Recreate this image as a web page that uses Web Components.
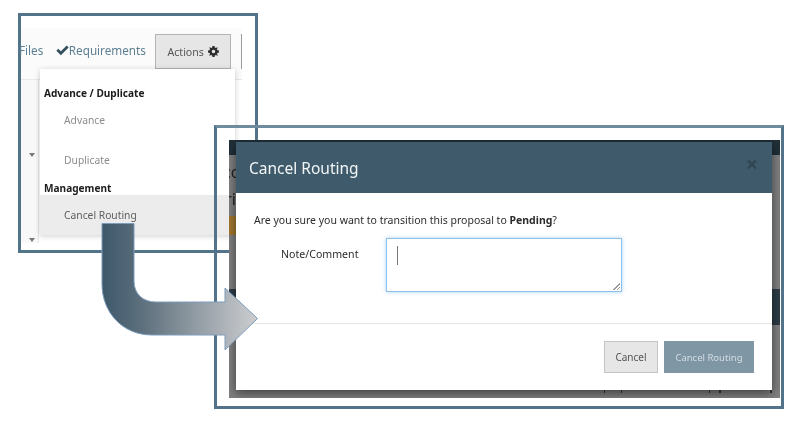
<!DOCTYPE html>
<html lang="en">
<head>
<meta charset="UTF-8">
<title>Cancel Routing</title>
<style>
  html, body { margin: 0; background: #fff; }
  body { width: 807px; height: 432px; overflow: hidden; font-family: "Noto Sans", "Open Sans", sans-serif; }
  #stage { position: relative; width: 807px; height: 432px; filter: blur(.4px); }
</style>
</head>
<body>
<div id="stage">
  <actions-callout></actions-callout>
  <modal-callout></modal-callout>
  <bent-arrow></bent-arrow>
</div>

<script>
  class MenuItem extends HTMLElement {
    constructor() {
      super();
      this.attachShadow({mode: 'open'}).innerHTML = `
        <style>
          :host { display: flex; align-items: center; height: var(--h, 40px); padding-left: 24px; font-size: 10.3px; color: #8c8c8c; }
          :host([active]) { background: #ececec; color: #5f5f5f; }
        </style>
        <slot></slot>`;
    }
  }
  customElements.define('menu-item', MenuItem);

  class MenuHeading extends HTMLElement {
    constructor() {
      super();
      this.attachShadow({mode: 'open'}).innerHTML = `
        <style>
          :host { display: flex; align-items: center; height: var(--h, 16px); padding-left: 4px; font-size: 10.1px; font-weight: 700; color: #1c1c1c; }
        </style>
        <slot></slot>`;
    }
  }
  customElements.define('menu-heading', MenuHeading);

  class ActionsCallout extends HTMLElement {
    constructor() {
      super();
      this.attachShadow({mode: 'open'}).innerHTML = `
        <style>
          :host { position: absolute; left: 18px; top: 13px; width: 240px; height: 240px; box-sizing: border-box; border: 3px solid #527389; padding-top: 12px; }
          .bar { display: flex; align-items: flex-start; width: 221px; height: 52px; box-sizing: border-box; background: #fbfbfb; border-bottom: 1px solid #e9e9e9; padding-top: 5px; }
          .tab { font-size: 11.7px; color: #5d7f93; line-height: 34px; }
          .files { width: 35px; text-indent: -2px; }
          .req { display: flex; align-items: center; gap: 0; width: 100px; }
          .req svg { width: 13px; height: 11px; flex: none; }
          .btn { display: flex; align-items: center; justify-content: center; gap: 4px; box-sizing: border-box; width: 76px; height: 35px; margin-top: 1px; background: #e6e6e6; border: 1px solid #b4b4b4; font-size: 10.6px; color: #555; }
          .btn svg { width: 11px; height: 11px; }
          .rule { width: 1px; height: 35px; margin: 1px 0 0 10px; background: #9a9a9a; }
          .side { display: flex; flex-direction: column; align-items: center; width: 18px; height: 163px; box-sizing: border-box; background: #f8f8f8; border-right: 1px solid #e6e6e6; padding: 73px 0 0 4px; gap: 81px; }
          .caret { width: 0; height: 0; border: 3px solid transparent; border-top: 4px solid #777; border-bottom: 0; }
          .menu { position: absolute; left: 19px; top: 53px; width: 195px; height: 166px; background: #fff; box-shadow: 0 1px 6px rgba(0,0,0,.2); padding-top: 16px; box-sizing: border-box; }
        </style>
        <div class="bar">
          <span class="tab files">Files</span>
          <span class="tab req">
            <svg viewBox="0 0 12 10"><path d="M0.3 5.2 L2.1 3.4 L4.5 5.8 L9.9 0.4 L11.7 2.2 L4.5 9.4 Z" fill="#34505f"/></svg>
            Requirements
          </span>
          <span class="btn">Actions
            <svg viewBox="-6 -6 12 12"><path fill="#2f2f2f" fill-rule="evenodd" d="M-1.1-6H1.100L1.500-4.300 2.700-3.800 4.200-4.700 4.700-4.200 3.800-2.700 4.300-1.500 6-1.100V1.100L4.300 1.500 3.800 2.700 4.700 4.200 4.200 4.700 2.700 3.800 1.500 4.300 1.100 6H-1.100L-1.500 4.300-2.700 3.800-4.200 4.700-4.700 4.200-3.800 2.700-4.300 1.500-6 1.100V-1.100L-4.300-1.500-3.800-2.700-4.700-4.200-4.200-4.700-2.700-3.800-1.500-4.300ZM0-1.900A1.900 1.900 0 1 0 0 1.900 1.900 1.900 0 1 0 0-1.900Z"/></svg>
          </span>
          <span class="rule"></span>
        </div>
        <div class="side"><span class="caret"></span><span class="caret"></span></div>
        <div class="menu">
          <menu-heading>Advance / Duplicate</menu-heading>
          <menu-item style="--h:38px">Advance</menu-item>
          <menu-item style="--h:41px">Duplicate</menu-item>
          <menu-heading style="--h:15px">Management</menu-heading>
          <menu-item active>Cancel Routing</menu-item>
        </div>`;
    }
  }
  customElements.define('actions-callout', ActionsCallout);

  class ModalCallout extends HTMLElement {
    constructor() {
      super();
      this.attachShadow({mode: 'open'}).innerHTML = `
        <style>
          :host { position: absolute; left: 214px; top: 125px; width: 570px; height: 284px; box-sizing: border-box; border: 3px solid #527389; border-top-color: #6f8c9f; padding: 12px 1px 8px 12px; }
          .backdrop { position: relative; height: 100%; box-sizing: border-box; padding: 2px 8px 8px 7px; overflow: hidden;
            background: linear-gradient(#1f2f38 0 15px, #7e7e7e 15px 149px, #2b3b45 149px 185px, #7e7e7e 185px); }
          .behind { position: absolute; left: -6px; width: 13px; overflow: hidden; white-space: nowrap; color: #222; font-size: 16px; line-height: 20px; text-align: right; }
          .orange { position: absolute; left: 0; top: 76px; width: 7px; height: 19px; background: #a0752f; }
          .ticks { position: absolute; right: 0; bottom: 4px; width: 180px; height: 4px; background:
            linear-gradient(#333,#333) 4px 0/1px 3px no-repeat, linear-gradient(#333,#333) 21px 0/1px 3px no-repeat,
            linear-gradient(#333,#333) 109px 0/1px 3px no-repeat, linear-gradient(#333,#333) 119px 0/2px 3px no-repeat,
            linear-gradient(#333,#333) 170px 0/2px 3px no-repeat; }
          .modal { position: relative; display: flex; flex-direction: column; height: 100%; background: #fff; box-shadow: 0 3px 9px rgba(0,0,0,.5); }
          header { display: flex; align-items: center; justify-content: space-between; height: 51px; box-sizing: border-box; padding: 0 14px 0 13px; background: #3f5b6b; color: #f2f5f6; font-size: 15.5px; }
          .close { font-size: 21px; font-weight: 700; color: #2f4654; line-height: 1; margin-top: -6px; }
          .body { flex: 1; padding: 19px 18px 0; border-bottom: 1px solid #e6e6e6; font-size: 10.5px; color: #2c2c2c; }
          .q { line-height: 16px; }
          .row { display: flex; align-items: flex-start; margin-top: 10px; }
          label { width: 132px; box-sizing: border-box; padding: 8px 0 0 27px; line-height: 16px; font-size: 10.6px; }
          .area { position: relative; box-sizing: border-box; width: 236px; height: 54px; border: 1px solid #8fc1ea; box-shadow: 0 0 4px rgba(102,175,233,.55); }
          .cursor { position: absolute; left: 10px; top: 7px; width: 1px; height: 19px; background: #777; }
          .grip { position: absolute; right: 1px; bottom: 1px; width: 7px; height: 7px; background: linear-gradient(135deg, transparent 50%, #999 50% 60%, transparent 60% 75%, #999 75% 85%, transparent 85%); }
          footer { display: flex; justify-content: flex-end; gap: 6px; height: 66px; box-sizing: border-box; padding: 17px 18px 0 0; }
          .b { display: flex; align-items: center; justify-content: center; box-sizing: border-box; height: 32px; }
          .cancel { width: 54px; background: #e6e6e6; border: 1px solid #c4c4c4; color: #555; font-size: 10px; }
          .go { width: 90px; background: #7f96a5; color: #d4dee4; font-size: 9.500px; }
        </style>
        <div class="backdrop">
          <span class="behind" style="top:22px">co</span>
          <span class="behind" style="top:49px">ri</span>
          <span class="orange"></span>
          <span class="ticks"></span>
          <div class="modal">
            <header><span>Cancel Routing</span><span class="close">&#215;</span></header>
            <div class="body">
              <div class="q">Are you sure you want to transition this proposal to <b>Pending</b>?</div>
              <div class="row">
                <label>Note/Comment</label>
                <div class="area"><span class="cursor"></span><span class="grip"></span></div>
              </div>
            </div>
            <footer>
              <span class="b cancel">Cancel</span>
              <span class="b go">Cancel Routing</span>
            </footer>
          </div>
        </div>`;
    }
  }
  customElements.define('modal-callout', ModalCallout);

  class BentArrow extends HTMLElement {
    constructor() {
      super();
      this.attachShadow({mode: 'open'}).innerHTML = `
        <style>
          :host { position: absolute; left: 100px; top: 221px; width: 160px; height: 132px; }
          svg { display: block; }
        </style>
        <svg width="160" height="132" viewBox="100 221 160 132">
          <defs>
            <linearGradient id="g" x1="102" x2="258" y1="0" y2="0" gradientUnits="userSpaceOnUse">
              <stop offset="0" stop-color="#3d586b"/>
              <stop offset=".25" stop-color="#5c6f7c"/>
              <stop offset="1" stop-color="#cdced0"/>
            </linearGradient>
          </defs>
          <path d="M102 223.5 H134 V281 C134 294 143 302 156 302 H225 V288 L257.500 318.500 L225 350 V335 H152 C122 335 102 312 102 284 Z"
            fill="url(#g)" stroke="#7d9cbc" stroke-width="1"/>
        </svg>`;
    }
  }
  customElements.define('bent-arrow', BentArrow);
</script>
</body>
</html>
